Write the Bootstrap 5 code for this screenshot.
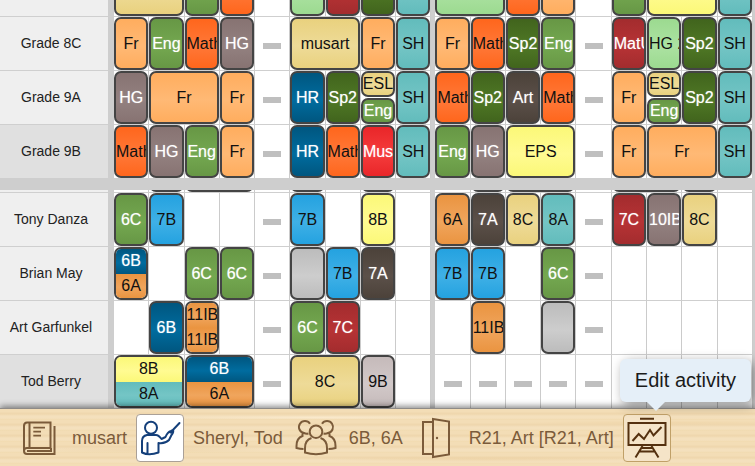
<!DOCTYPE html>
<html lang="en">
<head>
<meta charset="utf-8">
<meta name="viewport" content="width=device-width, initial-scale=1">
<title>Timetable</title>
<link rel="stylesheet" href="https://cdn.jsdelivr.net/npm/bootstrap@5.3.0/dist/css/bootstrap.min.css">
<style>
body{font-family:"Liberation Sans",Arial,sans-serif;background:#cecece;color:#111}
/* two panes, each showing the end of its table */
.pane{min-height:0;overflow:hidden}
.pane-classes{flex:178 1 0}
.pane-teachers{flex:218 1 0}
.timetable{table-layout:fixed;width:100%;border-collapse:separate;border-spacing:0;font-size:16px;flex:none}
.timetable .c-name{width:114px}
.timetable .c-gap{width:4px}
.timetable .c-end{width:2px}
.timetable th,.timetable td{padding:0;height:54px;border-top:1px solid #cfcfcf}
.timetable th{font-size:14px;font-weight:400;text-align:center;vertical-align:middle;background:#efefef;color:#222;border-right:6px solid #cecece;padding-right:6px}
.timetable tr.current th{background:#e0e0e0}
.timetable td{background:#fff;border-right:1px solid #cbcbcb}
.timetable td.gap{background:#cecece;border-color:#cecece}
.off::before{content:"";display:block;width:18px;height:6px;margin:4px auto 0;background:#bfbfbf}
.lesson{height:53px;line-height:49px;border:2px solid #444;border-radius:7px;overflow:hidden;white-space:nowrap;text-align:center;background:linear-gradient(var(--a),var(--b) 55%,var(--a))}
.lesson.half{height:26px;line-height:21px}
.lesson.half+.half{margin-top:1px}
.lesson.split{display:flex;flex-direction:column;background:none;line-height:24px}
.split>div{flex:1 1 0;background:linear-gradient(var(--a),var(--b) 55%,var(--a))}
.k-apricot{--a:#ffad5e;--b:#ffb975}
.k-green{--a:#679745;--b:#74a850}
.k-orange{--a:#ff661c;--b:#ff7838}
.k-mauve{--a:#877372;--b:#938180}
.k-sand{--a:#e9d17e;--b:#eedb98}
.k-teal{--a:#62bcbc;--b:#74c5c5}
.k-navy{--a:#00567f;--b:#006c9f}
.k-olive{--a:#41641d;--b:#4f7825}
.k-crimson{--a:#a32c2e;--b:#b73335}
.k-red{--a:#e92629;--b:#f53c3c}
.k-mint{--a:#9cda90;--b:#ace2a2}
.k-umber{--a:#4c423a;--b:#5b5049}
.k-lemon{--a:#fbf878;--b:#fffb92}
.k-sky{--a:#24a2e0;--b:#3fb0e6}
.k-amber{--a:#ea9440;--b:#f0a55d}
.k-grey{--a:#bcbcbc;--b:#cdcdcd}
.k-lilac{--a:#c5baba;--b:#d2c9c9}
.k-green,.k-mauve,.k-navy,.k-olive,.k-crimson,.k-red,.k-umber{color:#fff;text-shadow:0 0 1px #fff8}
/* wooden toolbar */
.toolbar{min-height:58px;padding:4px 15px 3px;gap:9px;border-top:1px solid #8e8b88;box-shadow:0 -2px 6px rgba(0,0,0,.45);color:#7b5b3a;font-size:18px;white-space:nowrap;
background:
radial-gradient(ellipse 130px 3px at 20% 72%,#e9cb9866,transparent),
radial-gradient(ellipse 170px 3px at 64% 88%,#e9cb9866,transparent),
radial-gradient(ellipse 150px 2px at 88% 24%,#e9cb9855,transparent),
radial-gradient(ellipse 160px 2px at 42% 15%,#f9e9cc,transparent),
repeating-linear-gradient(180deg,#f3ddb6 0 3px,#efd7ae 4px 5px,#f4e0bd 7px 9px,#f1daaf 11px)}
.tool{width:48px;height:48px;padding:0;border:1px solid transparent;border-radius:4px;background:none;color:#7b5b3a;flex:none}
.tool svg{display:block;width:48px;height:48px;margin:-1px;fill:none;stroke:currentColor;stroke-width:2}
.tool.chosen{background:#fff;border-color:#aaa097;color:#143f7a}
.tool.hovered{background:#f5e4c8;border-color:#c0a068;color:#54300f}
.tip{left:-3px;bottom:60px;padding:6px 15px 7px;border-radius:6px;background:#e5eff8;color:#1b1b1b;font-size:20px;line-height:30px;box-shadow:3px 3px 12px rgba(0,0,0,.4)}
.tip::after{content:"";position:absolute;left:27px;top:100%;border:9px solid transparent;border-top-color:#e5eff8;border-bottom:0}
</style>
<script src="https://cdn.jsdelivr.net/npm/bootstrap@5.3.0/dist/js/bootstrap.bundle.min.js"></script>
</head>
<body>
<div class="vh-100 d-flex flex-column overflow-hidden">
<main class="flex-fill d-flex flex-column overflow-hidden">
<section class="pane pane-classes d-flex flex-column justify-content-end mb-2" aria-label="Classes">
<table class="timetable">
<colgroup><col class="c-name"><col span="9"><col class="c-gap"><col span="9"><col class="c-end"></colgroup>
<tbody>
<tr><th scope="row"></th>
<td colspan="2"><div class="lesson k-sand"></div></td><td><div class="lesson k-green"></div></td><td><div class="lesson k-orange"></div></td><td></td><td><div class="lesson k-mint"></div></td><td><div class="lesson k-crimson"></div></td><td><div class="lesson k-olive"></div></td><td><div class="lesson k-teal"></div></td><td class="gap"></td>
<td colspan="2"><div class="lesson k-mint"></div></td><td><div class="lesson k-orange"></div></td><td><div class="lesson k-apricot"></div></td><td></td><td><div class="lesson k-green"></div></td><td colspan="2"><div class="lesson k-lemon"></div></td><td><div class="lesson k-teal"></div></td><td class="gap"></td></tr>
<tr><th scope="row">Grade 8C</th>
<td><div class="lesson k-apricot">Fr</div></td><td><div class="lesson k-green">Eng</div></td><td><div class="lesson k-orange">Math</div></td><td><div class="lesson k-mauve">HG</div></td><td class="off"></td><td colspan="2"><div class="lesson k-sand">musart</div></td><td><div class="lesson k-apricot">Fr</div></td><td><div class="lesson k-teal">SH</div></td><td class="gap"></td>
<td><div class="lesson k-apricot">Fr</div></td><td><div class="lesson k-orange">Math</div></td><td><div class="lesson k-olive">Sp2</div></td><td><div class="lesson k-green">Eng</div></td><td class="off"></td><td><div class="lesson k-crimson">MatU</div></td><td><div class="lesson k-mint">HG 2</div></td><td><div class="lesson k-olive">Sp2</div></td><td><div class="lesson k-teal">SH</div></td><td class="gap"></td></tr>
<tr><th scope="row">Grade 9A</th>
<td><div class="lesson k-mauve">HG</div></td><td colspan="2"><div class="lesson k-apricot">Fr</div></td><td><div class="lesson k-apricot">Fr</div></td><td class="off"></td><td><div class="lesson k-navy">HR</div></td><td><div class="lesson k-olive">Sp2</div></td><td><div class="lesson half k-sand">ESL</div><div class="lesson half k-green">Eng</div></td><td><div class="lesson k-teal">SH</div></td><td class="gap"></td>
<td><div class="lesson k-orange">Math</div></td><td><div class="lesson k-olive">Sp2</div></td><td><div class="lesson k-umber">Art</div></td><td><div class="lesson k-orange">Math</div></td><td class="off"></td><td><div class="lesson k-apricot">Fr</div></td><td><div class="lesson half k-sand">ESL</div><div class="lesson half k-green">Eng</div></td><td><div class="lesson k-olive">Sp2</div></td><td><div class="lesson k-teal">SH</div></td><td class="gap"></td></tr>
<tr class="current"><th scope="row">Grade 9B</th>
<td><div class="lesson k-orange">Math</div></td><td><div class="lesson k-mauve">HG</div></td><td><div class="lesson k-green">Eng</div></td><td><div class="lesson k-apricot">Fr</div></td><td class="off"></td><td><div class="lesson k-navy">HR</div></td><td><div class="lesson k-orange">Math</div></td><td><div class="lesson k-red">Mus</div></td><td><div class="lesson k-teal">SH</div></td><td class="gap"></td>
<td><div class="lesson k-green">Eng</div></td><td><div class="lesson k-mauve">HG</div></td><td colspan="2"><div class="lesson k-lemon">EPS</div></td><td class="off"></td><td><div class="lesson k-apricot">Fr</div></td><td colspan="2"><div class="lesson k-apricot">Fr</div></td><td><div class="lesson k-teal">SH</div></td><td class="gap"></td></tr>
</tbody>
</table>
</section>
<section class="pane pane-teachers d-flex flex-column justify-content-end mt-1" aria-label="Teachers">
<table class="timetable">
<colgroup><col class="c-name"><col span="9"><col class="c-gap"><col span="9"><col class="c-end"></colgroup>
<tbody>
<tr><th scope="row"></th>
<td></td><td><div class="lesson k-grey"></div></td><td colspan="2"><div class="lesson k-grey"></div></td><td></td><td><div class="lesson k-grey"></div></td><td></td><td><div class="lesson k-grey"></div></td><td></td><td class="gap"></td>
<td></td><td><div class="lesson k-grey"></div></td><td colspan="2"><div class="lesson k-grey"></div></td><td></td><td colspan="2"><div class="lesson k-grey"></div></td><td><div class="lesson k-grey"></div></td><td></td><td class="gap"></td></tr>
<tr><th scope="row">Tony Danza</th>
<td><div class="lesson k-green">6C</div></td><td><div class="lesson k-sky">7B</div></td><td></td><td></td><td class="off"></td><td><div class="lesson k-sky">7B</div></td><td></td><td><div class="lesson k-lemon">8B</div></td><td></td><td class="gap"></td>
<td><div class="lesson k-amber">6A</div></td><td><div class="lesson k-umber">7A</div></td><td><div class="lesson k-sand">8C</div></td><td><div class="lesson k-teal">8A</div></td><td class="off"></td><td><div class="lesson k-crimson">7C</div></td><td><div class="lesson k-mauve">10IB</div></td><td><div class="lesson k-sand">8C</div></td><td></td><td class="gap"></td></tr>
<tr><th scope="row">Brian May</th>
<td><div class="lesson split"><div class="k-navy">6B</div><div class="k-amber">6A</div></div></td><td></td><td><div class="lesson k-green">6C</div></td><td><div class="lesson k-green">6C</div></td><td class="off"></td><td><div class="lesson k-grey"></div></td><td><div class="lesson k-sky">7B</div></td><td><div class="lesson k-umber">7A</div></td><td></td><td class="gap"></td>
<td><div class="lesson k-sky">7B</div></td><td><div class="lesson k-sky">7B</div></td><td></td><td><div class="lesson k-green">6C</div></td><td class="off"></td><td></td><td></td><td></td><td></td><td class="gap"></td></tr>
<tr><th scope="row">Art Garfunkel</th>
<td></td><td><div class="lesson k-navy">6B</div></td><td><div class="lesson split"><div class="k-amber">11IB</div><div class="k-amber">11IB</div></div></td><td></td><td class="off"></td><td><div class="lesson k-green">6C</div></td><td><div class="lesson k-crimson">7C</div></td><td></td><td></td><td class="gap"></td>
<td></td><td><div class="lesson k-amber">11IB</div></td><td></td><td><div class="lesson k-grey"></div></td><td class="off"></td><td></td><td></td><td></td><td></td><td class="gap"></td></tr>
<tr class="current"><th scope="row">Tod Berry</th>
<td colspan="2"><div class="lesson split"><div class="k-lemon">8B</div><div class="k-teal">8A</div></div></td><td colspan="2"><div class="lesson split"><div class="k-navy">6B</div><div class="k-amber">6A</div></div></td><td class="off"></td><td colspan="2"><div class="lesson k-sand">8C</div></td><td><div class="lesson k-lilac">9B</div></td><td></td><td class="gap"></td>
<td class="off"></td><td class="off"></td><td class="off"></td><td class="off"></td><td class="off"></td><td class="off"></td><td class="off"></td><td class="off"></td><td class="off"></td><td class="gap"></td></tr>
</tbody>
</table>
</section>
</main>
<footer class="toolbar d-flex align-items-center position-relative">
<button type="button" class="tool" aria-label="Subject"><svg viewBox="0 0 48 48"><path d="M12 8.500H35.500V34H12Q9 34 9 37T12 40H39.500V12M12 8.500Q9 8.500 9 12V37M14.500 8.500V34M12 37H36V34"/><path d="M18.300 13.700H30M18.300 17.700H26M18.300 21.700H26" stroke-width="1.800"/></svg></button>
<span>musart</span>
<button type="button" class="tool chosen" aria-label="Teachers"><svg viewBox="0 0 48 48" stroke-linecap="round" stroke-linejoin="round"><circle cx="15" cy="13.700" r="6"/><path d="M11 21H20Q22.500 21 25.500 25L29.500 23Q31.500 18 35 17L37 16Q38 18 35.500 21L33 26Q29 30 22.500 29V38.500Q13 42 6 38.500V27Q6 22 11 21ZM11.500 29V39.500M34.500 18.500L43.500 9"/></svg></button>
<span>Sheryl, Tod</span>
<button type="button" class="tool" aria-label="Classes"><svg viewBox="0 0 48 48"><circle cx="24" cy="17.700" r="6.300"/><path d="M19.500 24Q13 26 13 34V38.500Q24 42 35 38.500V34Q35 26 28.500 24M18 9.800A6 6 0 1 0 12 19Q14 20 16.500 19.500M30 9.800A6 6 0 1 1 36 19Q34 20 31.500 19.500M10.500 18.500V22Q4.500 24 4.500 32V34Q8 35 11.500 35M37.500 18.500V22Q43.500 24 43.500 32V34Q40 35 36.500 35"/></svg></button>
<span>6B, 6A</span>
<button type="button" class="tool" aria-label="Rooms"><svg viewBox="0 0 48 48"><path d="M21 8H11V40H21M21 5L37 7.500V40.500L21 43Z"/><circle cx="25" cy="24" r="1.200" fill="currentColor" stroke="none"/></svg></button>
<span>R21, Art [R21, Art]</span>
<div class="position-relative">
<button type="button" class="tool hovered d-block" aria-label="Edit activity" aria-describedby="edit-tip"><svg viewBox="0 0 48 48"><path d="M17 4.800H31M5.500 9H42.500V31H5.500ZM19.500 32L12.500 43.500M28.500 32L35.500 43.500M18 34H30M16.500 37.500H31.500"/><path d="M9.500 27L15.700 20L21 25L27 16L30.500 21.500L38.500 13"/></svg></button>
<div class="tip position-absolute text-nowrap" id="edit-tip" role="tooltip">Edit activity</div>
</div>
</footer>
</div>
</body>
</html>
